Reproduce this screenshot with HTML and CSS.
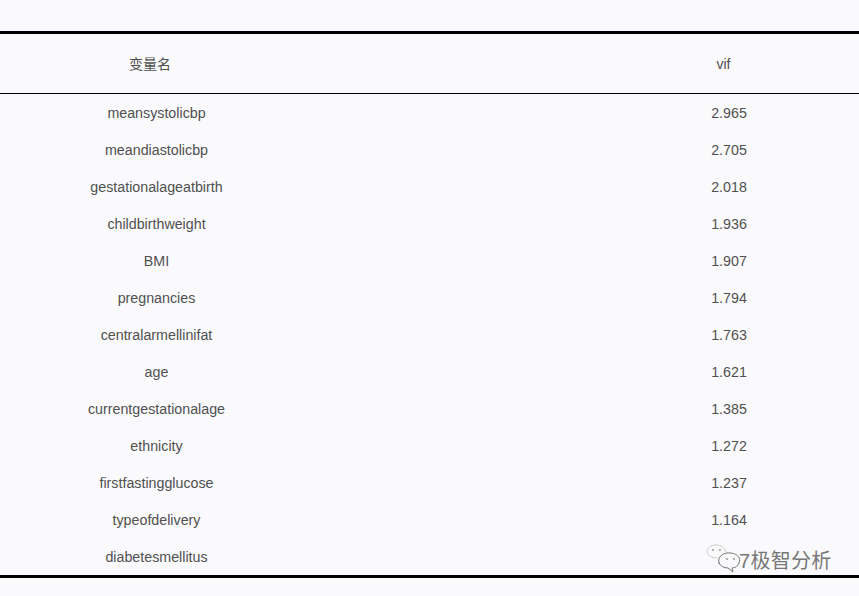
FILE: index.html
```html
<!DOCTYPE html>
<html lang="zh">
<head>
<meta charset="utf-8">
<title>vif</title>
<link rel="stylesheet" href="styles.css">
</head>
<body>
<main class="sheet">
  <div class="vif-table">
    <div class="row head"><div class="name">变量名</div><div class="val">vif</div></div>
    <div class="row"><div class="name">meansystolicbp</div><div class="val">2.965</div></div>
    <div class="row"><div class="name">meandiastolicbp</div><div class="val">2.705</div></div>
    <div class="row"><div class="name">gestationalageatbirth</div><div class="val">2.018</div></div>
    <div class="row"><div class="name">childbirthweight</div><div class="val">1.936</div></div>
    <div class="row"><div class="name">BMI</div><div class="val">1.907</div></div>
    <div class="row"><div class="name">pregnancies</div><div class="val">1.794</div></div>
    <div class="row"><div class="name">centralarmellinifat</div><div class="val">1.763</div></div>
    <div class="row"><div class="name">age</div><div class="val">1.621</div></div>
    <div class="row"><div class="name">currentgestationalage</div><div class="val">1.385</div></div>
    <div class="row"><div class="name">ethnicity</div><div class="val">1.272</div></div>
    <div class="row"><div class="name">firstfastingglucose</div><div class="val">1.237</div></div>
    <div class="row"><div class="name">typeofdelivery</div><div class="val">1.164</div></div>
    <div class="row"><div class="name">diabetesmellitus</div><div class="val"></div></div>
  </div>
  <div class="mark">
    <svg class="mark-icon" width="42" height="30" viewBox="0 0 42 30" fill="none" stroke-linecap="round">
      <path class="light" d="M11 14C6 14 2 12 1 8C1 4 5 1 10 1C15 1 19 4 20 8" />
      <path class="dark" d="M13 19C11 13 17 8 25 9C32 10 35 14 33 19C32 22 29 24 26 24L27 28L22 24C18 24 14 22 13 19Z" />
      <circle class="dot" cx="7" cy="6" r="1"/><circle class="dot" cx="14" cy="6" r="1"/>
      <circle class="dot" cx="21" cy="15" r="1"/><circle class="dot" cx="28" cy="15" r="1"/>
    </svg>
    <span class="mark-text">7极智分析</span>
  </div>
</main>
</body>
</html>
```
FILE: styles.css
```css
html, body {
  margin: 0;
  padding: 0;
  background: #fafafc;
}
.sheet {
  position: relative;
  width: 859px;
  height: 596px;
  padding-top: 31px;
  box-sizing: border-box;
  overflow: hidden;
  font-family: "Liberation Sans", "Noto Sans CJK SC", sans-serif;
  font-size: 14.25px;
  color: #505050;
}
.vif-table {
  border-top: 3px solid #000;
  border-bottom: 3px solid #000;
}
.row {
  display: grid;
  grid-template-columns: 313px 286px 1fr;
  height: 37px;
  align-items: center;
  text-align: center;
}
.row .name { grid-column: 1; }
.row .val { grid-column: 3; }
.head {
  height: 59px;
  border-bottom: 1px solid #000;
}
.head .name { padding-right: 13px; padding-bottom: 2px; font-size: 14px; }
.head .val { padding-right: 11px; font-size: 14px; }
.mark {
  position: absolute;
  left: 706px;
  top: 544px;
  display: flex;
  align-items: center;
}
.mark-icon { margin-right: -9px; }
.mark-text {
  font-size: 20px;
  color: #777;
  letter-spacing: 0.3px;
}
.light { stroke: #ccc; stroke-width: 1; }
.dark { stroke: #777; stroke-width: 1; }
.dot { fill: #999; }
```
